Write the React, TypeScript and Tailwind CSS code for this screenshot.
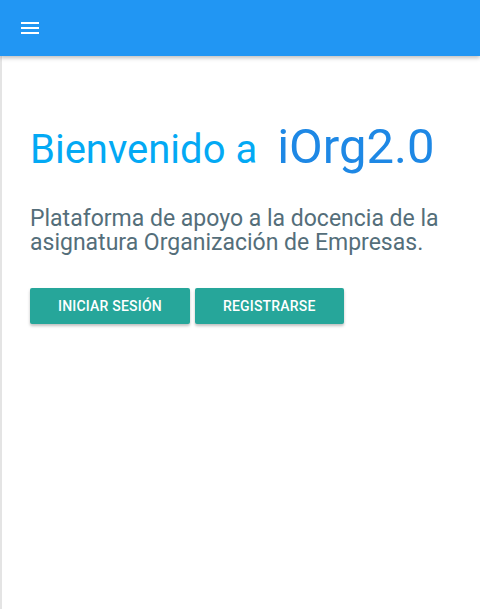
export default function App() {
  return (
    <div className="min-h-[609px] bg-white border-l-2 border-[#e4e4e4] font-['Roboto',sans-serif]">
      <Header />
      <main className="px-[28px] pt-[66px]">
        <h1 className="flex items-baseline gap-x-[20px] font-normal leading-none">
          <span className="text-[#03a9f4] text-[40px]">Bienvenido a</span>
          <span className="text-[#1e88e5] text-[49px]">iOrg2.0</span>
        </h1>
        <p className="mt-[36px] text-[#546e7a] text-[23px] leading-[24px]">
          Plataforma de apoyo a la docencia de la asignatura Organización de
          Empresas.
        </p>
        <div className="flex gap-x-[5px] mt-[33px]">
          <Button>Iniciar sesión</Button>
          <Button>Registrarse</Button>
        </div>
      </main>
    </div>
  );
}

function Header() {
  return (
    <header className="h-[56px] bg-[#2196f3] flex items-center px-[18px] shadow-[0_2px_4px_rgba(0,0,0,0.25)] -ml-[2px]">
      <svg width="24" height="24" viewBox="0 0 24 24" fill="white">
        <path d="M3 18h18v-2H3v2zm0-5h18v-2H3v2zm0-7v2h18V6H3z" />
      </svg>
    </header>
  );
}

function Button({ children }: { children: React.ReactNode }) {
  return (
    <button className="h-[36px] px-[28px] rounded-[2px] bg-[#26a69a] text-white text-[14px] font-medium uppercase tracking-[0.2px] shadow-[0_2px_3px_rgba(0,0,0,0.25)]">
      {children}
    </button>
  );
}
